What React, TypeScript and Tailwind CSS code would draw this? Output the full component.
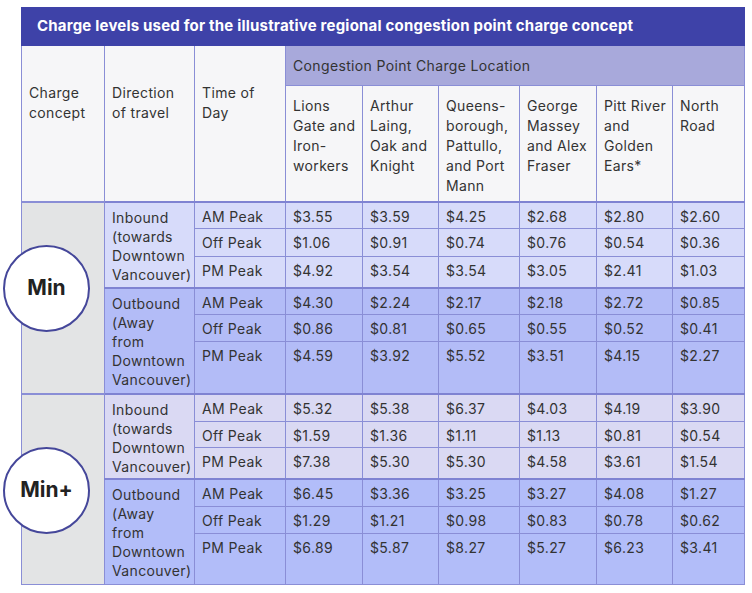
const locations = [
  ["Lions", "Gate and", "Iron-", "workers"],
  ["Arthur", "Laing,", "Oak and", "Knight"],
  ["Queens-", "borough,", "Pattullo,", "and Port", "Mann"],
  ["George", "Massey", "and Alex", "Fraser"],
  ["Pitt River", "and", "Golden", "Ears*"],
  ["North", "Road"],
];

type Group = {
  dir: string[];
  bg: string;
  heights: number[];
  rows: string[][];
};

type Section = { label: string; top: string; groups: Group[] };

const times = ["AM Peak", "Off Peak", "PM Peak"];

const sections: Section[] = [
  {
    label: "Min",
    top: "top-[42px]",
    groups: [
      {
        dir: ["Inbound", "(towards", "Downtown", "Vancouver)"],
        bg: "bg-[#d7dbfa]",
        heights: [27, 28, 31],
        rows: [
          ["3.55", "3.59", "4.25", "2.68", "2.80", "2.60"],
          ["1.06", "0.91", "0.74", "0.76", "0.54", "0.36"],
          ["4.92", "3.54", "3.54", "3.05", "2.41", "1.03"],
        ],
      },
      {
        dir: ["Outbound", "(Away", "from", "Downtown", "Vancouver)"],
        bg: "bg-[#b3bcf7]",
        heights: [27, 27, 52],
        rows: [
          ["4.30", "2.24", "2.17", "2.18", "2.72", "0.85"],
          ["0.86", "0.81", "0.65", "0.55", "0.52", "0.41"],
          ["4.59", "3.92", "5.52", "3.51", "4.15", "2.27"],
        ],
      },
    ],
  },
  {
    label: "Min+",
    top: "top-[52px]",
    groups: [
      {
        dir: ["Inbound", "(towards", "Downtown", "Vancouver)"],
        bg: "bg-[#dad9f3]",
        heights: [28, 26, 31],
        rows: [
          ["5.32", "5.38", "6.37", "4.03", "4.19", "3.90"],
          ["1.59", "1.36", "1.11", "1.13", "0.81", "0.54"],
          ["7.38", "5.30", "5.30", "4.58", "3.61", "1.54"],
        ],
      },
      {
        dir: ["Outbound", "(Away", "from", "Downtown", "Vancouver)"],
        bg: "bg-[#b2bdf9]",
        heights: [28, 27, 51],
        rows: [
          ["6.45", "3.36", "3.25", "3.27", "4.08", "1.27"],
          ["1.29", "1.21", "0.98", "0.83", "0.78", "0.62"],
          ["6.89", "5.87", "8.27", "5.27", "6.23", "3.41"],
        ],
      },
    ],
  },
];

const cell = "border border-[#8a8ed6] align-top pl-[7px] pt-[4px] leading-[19px]";

const Lines = ({ lines }: { lines: string[] }) => (
  <>
    {lines.map((l, i) => (
      <div key={i} className="whitespace-nowrap">
        {l}
      </div>
    ))}
  </>
);

const App = () => {
  return (
    <div className="min-h-screen bg-white pt-[7px] pl-[21px] font-['Inter',sans-serif] text-[14px] tracking-[0.35px] text-[#333]">
      <table className="table-fixed border-collapse w-[723px] border border-[#9da0dd]">
        <colgroup>
          <col className="w-[83px]" />
          <col className="w-[90px]" />
          <col className="w-[91px]" />
          <col className="w-[77px]" />
          <col className="w-[76px]" />
          <col className="w-[81px]" />
          <col className="w-[77px]" />
          <col className="w-[76px]" />
          <col className="w-[72px]" />
        </colgroup>
        <thead>
          <tr className="h-[38px]">
            <th
              colSpan={9}
              className="bg-[#3e42a8] border border-[#3e42a8] text-left pl-[15px] text-white font-bold text-[15px] tracking-[0.2px]"
            >
              Charge levels used for the illustrative regional congestion point charge concept
            </th>
          </tr>
          <tr className="h-[40px]">
            <th rowSpan={2} className={`${cell} font-normal text-left bg-[#f6f6f8] pt-[37px] leading-[20px]`}>
              <Lines lines={["Charge", "concept"]} />
            </th>
            <th rowSpan={2} className={`${cell} font-normal text-left bg-[#f6f6f8] pt-[37px] leading-[20px]`}>
              <Lines lines={["Direction", "of travel"]} />
            </th>
            <th rowSpan={2} className={`${cell} font-normal text-left bg-[#f6f6f8] pt-[37px] leading-[20px]`}>
              <Lines lines={["Time of", "Day"]} />
            </th>
            <th
              colSpan={6}
              className="border border-[#8a8ed6] bg-[#a8a9db] font-normal text-left pl-[7px] align-middle"
            >
              Congestion Point Charge Location
            </th>
          </tr>
          <tr className="h-[116px]">
            {locations.map((loc, i) => (
              <th key={i} className={`${cell} font-normal text-left bg-[#f6f6f8] pt-[10px] leading-[20px]`}>
                <Lines lines={loc} />
              </th>
            ))}
          </tr>
        </thead>
        <tbody>
          {sections.map((sec) =>
            sec.groups.map((g, gi) =>
              g.rows.map((row, ri) => (
                <tr
                  key={`${sec.label}-${gi}-${ri}`}
                  className={`${g.bg} ${ri === 0 ? "border-t-2 border-[#7f83d2]" : ""}`}
                  style={{ height: g.heights[ri] }}
                >
                  {gi === 0 && ri === 0 && (
                    <td rowSpan={6} className="relative border border-[#8a8ed6] bg-[#e3e4e5] border-t-2">
                      <div
                        className={`absolute left-[-19px] ${sec.top} w-[87px] h-[87px] rounded-full border-[2.5px] border-[#45479a] bg-white flex items-center justify-center font-bold text-[21px] text-[#222] tracking-normal`}
                      >
                        {sec.label}
                      </div>
                    </td>
                  )}
                  {ri === 0 && (
                    <td rowSpan={3} className={`${cell} pt-[5px] leading-[19.5px]`}>
                      <Lines lines={g.dir} />
                    </td>
                  )}
                  <td className={cell}>{times[ri]}</td>
                  {row.map((v, vi) => (
                    <td key={vi} className={cell}>
                      ${v}
                    </td>
                  ))}
                </tr>
              ))
            )
          )}
        </tbody>
      </table>
    </div>
  );
};

export default App;
